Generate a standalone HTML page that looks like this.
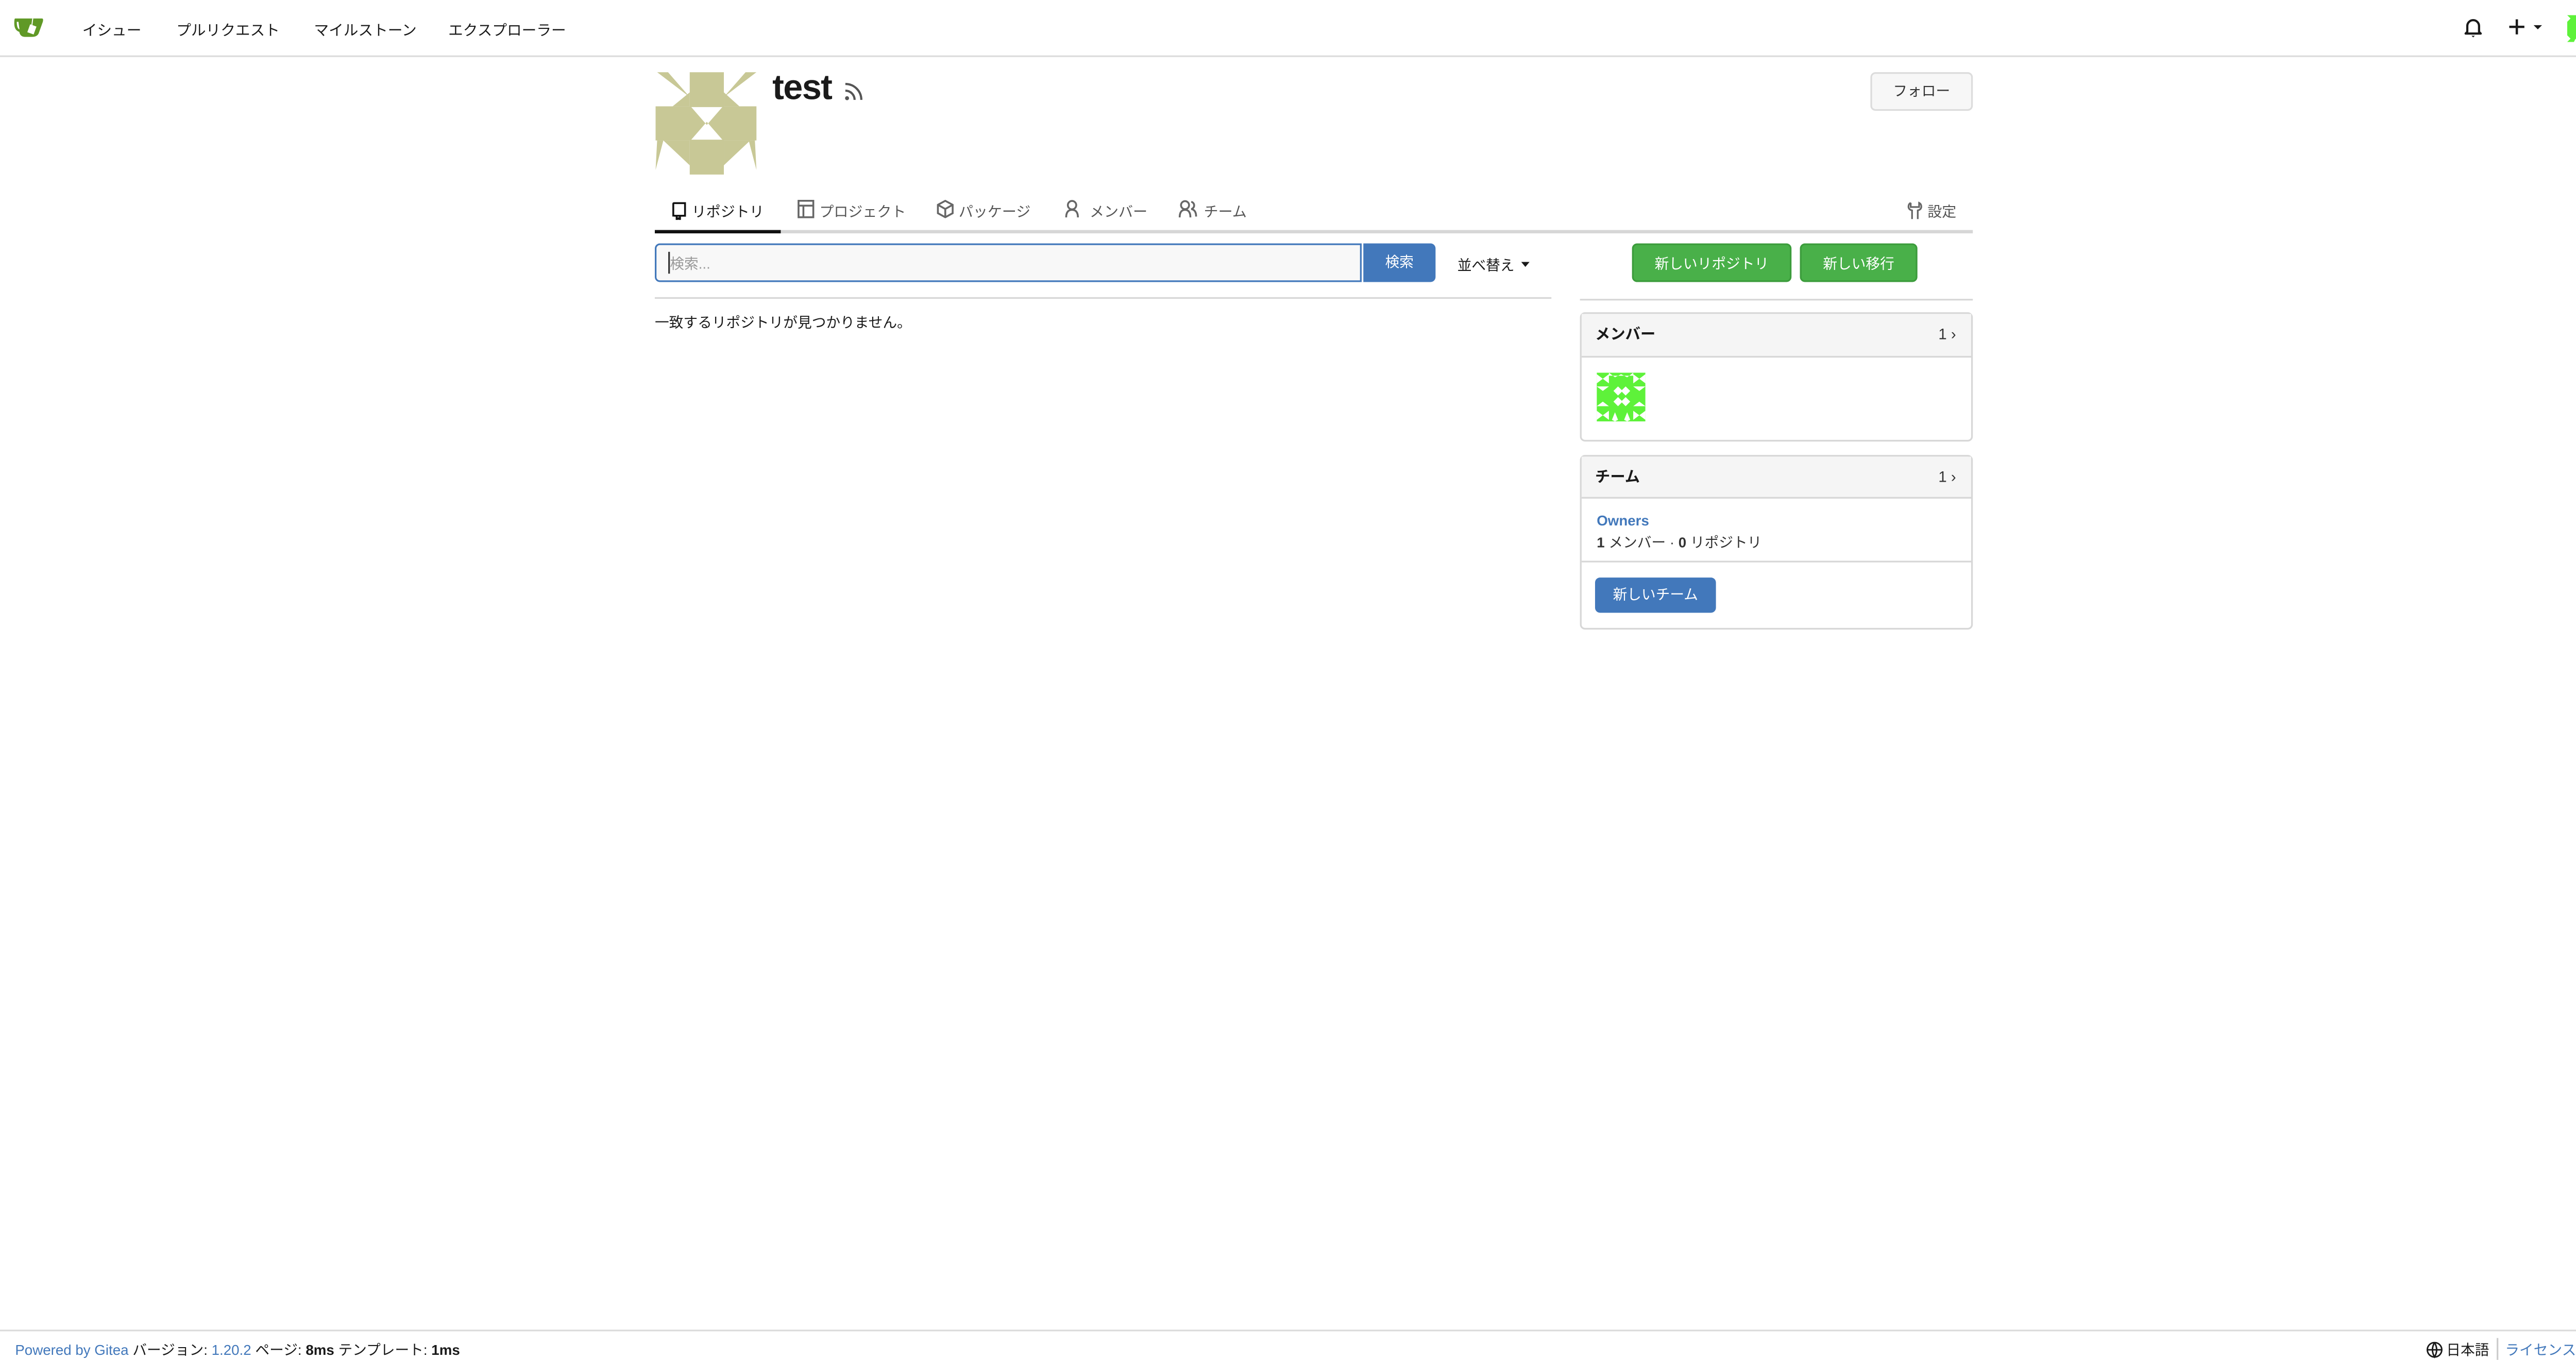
<!DOCTYPE html>
<html><head><meta charset="utf-8">
<style>
html,body{margin:0;padding:0;background:#fff;width:5110px;height:2640px;overflow:hidden;}
#w{position:absolute;left:0;top:0;width:1568px;height:810px;transform:scale(3.25893);transform-origin:0 0;font-family:"Liberation Sans","Noto Sans CJK JP",sans-serif;color:#1a1a1a;font-size:13px;}
.a{position:absolute;white-space:nowrap;}
.nav{position:absolute;left:0;top:0;width:1568px;height:33px;border-bottom:1px solid #dcdcdc;}
.blue{color:#4278bb;}
.box{position:absolute;border:1px solid #d7d7d7;border-radius:3px;background:#fff;}
.hdr{background:#f5f5f5;border-bottom:1px solid #d7d7d7;font-weight:bold;}
.btn{position:absolute;border-radius:3px;color:#fff;font-size:8.5px;text-align:center;}
.ni{font-size:8.8px;top:10.5px;}
.t{font-size:8.6px;top:120px;color:#555;}
</style></head><body><div id="w">
<div class="nav"></div>
<svg class="a" style="left:8px;top:9px" width="19" height="13" viewBox="0 0 19 13">
<path d="M1 2 H17 Q18 2 17.5 4 L15 11 Q14 13 11 13 H7 Q4 13 3.5 10 Q0.5 9 0.5 5 Q0.5 2 1 2Z" fill="#609926"/>
<path d="M2 4 Q2 8 3.6 8.5 L3 4Z" fill="#fff"/>
<rect x="9" y="6" width="4" height="5" transform="rotate(20 11 8.5)" fill="#fff"/>
<line x1="11.5" y1="2" x2="11" y2="6" stroke="#fff" stroke-width="0.6"/>
</svg>
<div class="a ni" style="left:49px">イシュー</div>
<div class="a ni" style="left:105px">プルリクエスト</div>
<div class="a ni" style="left:187px">マイルストーン</div>
<div class="a ni" style="left:267px">エクスプローラー</div>
<svg class="a" style="left:1467px;top:10px" width="12" height="13" viewBox="0 0 12 13"><path d="M2.5 9 V5.5 A3.5 3.5 0 0 1 9.5 5.5 V9 L10.5 10 H1.5Z" fill="none" stroke="#1a1a1a" stroke-width="1.3" stroke-linejoin="round"/><path d="M5 11.3 H7 L6 12.3Z" fill="#1a1a1a"/></svg>
<svg class="a" style="left:1493px;top:10px" width="24" height="12" viewBox="0 0 24 12"><path d="M6 1.5V10.5M1.5 6H10.5" stroke="#1a1a1a" stroke-width="1.4"/><path d="M16 5H21L18.5 7.5Z" fill="#1a1a1a"/></svg>
<svg class="a" style="left:1529px;top:9px" width="16" height="16" viewBox="0 0 16 16"><rect width="16" height="16" fill="#5ef23a"/><g fill="#fff"><path d="M6 5L8 3L10 5L8 7Z M6 10L8 8L10 10L8 12Z"/><path d="M0 0L2 2L0 4Z M16 0L14 2L16 4Z M0 12L2 14L0 16Z M16 12L14 14L16 16Z"/><path d="M5 14L6 16H4Z M11 14L12 16H10Z"/></g></svg>
<svg class="a" style="left:1547px;top:14px" width="6" height="4"><path d="M0 0H6L3 3Z" fill="#1a1a1a"/></svg>

<svg class="a" style="left:390px;top:43px" width="61" height="61" viewBox="0 0 65 66">
<g fill="#c8c896">
<rect x="22" y="0" width="22" height="66"/>
<rect x="0" y="22" width="65" height="22"/>
<path d="M1 0H8L22 16Z M65 0H58L44 16Z"/>
<path d="M11 22L22 13V22Z M54 22L44 13V22Z"/>
<path d="M5 44L22 60V44Z M61 44L44 60V44Z"/>
<path d="M0 63L1 44H5Z M65 63L64 44H60Z"/>
</g>
<path d="M23 22.5H43L33 34Z M23 43.5H43L33 32Z" fill="#fff"/>
</svg>
<div class="a" style="left:460px;top:41px;font-size:21px;font-weight:bold;letter-spacing:-0.5px">test</div>
<svg class="a" style="left:502px;top:48px" width="13" height="13" viewBox="0 0 13 13"><circle cx="2.5" cy="10.5" r="1.2" fill="#555"/><path d="M1.5 6A5.5 5.5 0 0 1 7 11.5M1.5 2A9.5 9.5 0 0 1 11 11.5" stroke="#555" stroke-width="1.3" fill="none"/></svg>
<div class="a" style="left:1114px;top:43px;width:59px;height:21px;border:1px solid #dcdcdc;border-radius:3px;background:#f7f7f7;font-size:8.5px;line-height:21px;text-align:center;color:#333">フォロー</div>

<!-- tabs -->
<div class="a" style="left:390px;top:137px;width:785px;height:1.5px;background:#d7d7d7"></div>
<div class="a" style="left:390px;top:136.5px;width:75px;height:2px;background:#111"></div>
<svg class="a" style="left:400px;top:120px" width="9" height="11" viewBox="0 0 9 11"><path d="M1 9V1.5Q1 1 1.5 1H8V8.5H1.5M3 8.5V11L4 10L5 11V8.5" fill="none" stroke="#111" stroke-width="1.1"/></svg>
<div class="a t" style="left:412px;color:#1a1a1a">リポジトリ</div>
<svg class="a" style="left:475px;top:119px" width="10" height="11" viewBox="0 0 10 11"><rect x="0.6" y="0.6" width="8.8" height="9.8" fill="none" stroke="#666" stroke-width="1.1"/><path d="M0.6 3.5H9.4M3.5 3.5V10.4" stroke="#666" stroke-width="1.1"/></svg>
<div class="a t" style="left:488px">プロジェクト</div>
<svg class="a" style="left:558px;top:119px" width="10" height="11" viewBox="0 0 10 11"><path d="M5 0.6L9.4 3V8L5 10.4L0.6 8V3Z M0.6 3L5 5.5L9.4 3M5 5.5V10.4" fill="none" stroke="#666" stroke-width="1.1"/></svg>
<div class="a t" style="left:571px">パッケージ</div>
<svg class="a" style="left:634px;top:119px" width="9" height="11" viewBox="0 0 9 11"><circle cx="4.5" cy="3.2" r="2.5" fill="none" stroke="#666" stroke-width="1.1"/><path d="M1 10.5Q1 6 4.5 6Q8 6 8 10.5" fill="none" stroke="#666" stroke-width="1.1"/></svg>
<div class="a t" style="left:649px">メンバー</div>
<svg class="a" style="left:702px;top:119px" width="11" height="11" viewBox="0 0 11 11"><circle cx="3.8" cy="3.2" r="2.4" fill="none" stroke="#666" stroke-width="1.1"/><path d="M0.6 10.5Q0.6 6 3.8 6Q7 6 7 10.5M7.5 1.2A2.2 2.2 0 0 1 7.5 5.5Q10.4 6 10.4 10" fill="none" stroke="#666" stroke-width="1.1"/></svg>
<div class="a t" style="left:717px">チーム</div>
<svg class="a" style="left:1136px;top:120px" width="9" height="11" viewBox="0 0 9 11"><path d="M2 0.8Q0.5 1.5 0.7 3.5Q1 5 2.8 5.3V10.5M6.2 10.5V5.3Q8 5 8.3 3.5Q8.5 1.5 7 0.8V3.3H2V0.8" fill="none" stroke="#666" stroke-width="1"/></svg>
<div class="a t" style="left:1148px">設定</div>

<!-- search -->
<div class="a" style="left:390px;top:145px;width:419px;height:21px;border:1px solid #4278bb;border-radius:3px 0 0 3px;background:#f8f8f8"></div>
<div class="a" style="left:399px;top:151px;font-size:8.5px;color:#999">検索...</div>
<div class="a" style="left:398px;top:150px;width:0.5px;height:13px;background:#333"></div>
<div class="btn" style="left:812px;top:145px;width:43px;height:23px;line-height:23px;background:#4278bb;border-radius:0 3px 3px 0">検索</div>
<div class="a" style="left:868px;top:152px;font-size:8.5px">並べ替え</div>
<svg class="a" style="left:906px;top:156px" width="6" height="4"><path d="M0 0H5L2.5 3Z" fill="#1a1a1a"/></svg>
<div class="a" style="left:390px;top:176.5px;width:534px;height:1px;background:#d7d7d7"></div>
<div class="a" style="left:390px;top:186px;font-size:8.5px">一致するリポジトリが見つかりません。</div>

<!-- right -->
<div class="btn" style="left:972px;top:145px;width:95px;height:23px;line-height:23px;background:#49b049;border:0.5px solid #3c9c3c;box-sizing:border-box">新しいリポジトリ</div>
<div class="btn" style="left:1072px;top:145px;width:70px;height:23px;line-height:23px;background:#49b049;border:0.5px solid #3c9c3c;box-sizing:border-box">新しい移行</div>
<div class="a" style="left:941px;top:177.5px;width:234px;height:1px;background:#d7d7d7"></div>

<div class="box" style="left:941px;top:186px;width:232px;height:75px">
<div class="hdr" style="height:25px;line-height:25px;padding-left:8px;font-size:9px;position:relative">メンバー<span style="position:absolute;right:9px;font-weight:normal;color:#333">1 ›</span></div>
<svg style="position:absolute;left:9px;top:35px" width="29" height="29" viewBox="0 0 16 16"><rect width="16" height="16" fill="#5ef23a"/><g fill="#fff"><path d="M4 0L6 1.5L8 0.5L10 1.5L12 0V1H4Z"/><path d="M5.5 6L7 4.5L8.5 6L7 7.5Z M8 6L9.5 4.5L11 6L9.5 7.5Z M5.5 9.5L7 8L8.5 9.5L7 11Z M8 9.5L9.5 8L11 9.5L9.5 11Z"/><path d="M0 0.5L2 2L0 3.5Z M4 0.5L2 2L4 3.5Z M12 0.5L14 2L12 3.5Z M16 0.5L14 2L16 3.5Z M0 12.5L2 14L0 15.5Z M4 12.5L2 14L4 15.5Z M12 12.5L14 14L12 15.5Z M16 12.5L14 14L16 15.5Z"/><path d="M0 4.5H4L2 6Z M12 4.5H16L14 6Z M0 11H4L2 9.5Z M12 11H16L14 9.5Z M6 13L7 15.5L6 16L5 15.5Z M10 13L11 15.5L10 16L9 15.5Z"/></g></svg>
</div>

<div class="box" style="left:941px;top:271px;width:232px;height:102px">
<div class="hdr" style="height:24px;line-height:24px;padding-left:8px;font-size:9px;position:relative">チーム<span style="position:absolute;right:9px;font-weight:normal;color:#333">1 ›</span></div>
<div class="a blue" style="left:9px;top:33px;font-size:8.5px;font-weight:bold">Owners</div>
<div class="a" style="left:9px;top:45px;font-size:8.5px;color:#333"><b>1</b> メンバー · <b>0</b> リポジトリ</div>
<div class="a" style="left:0;top:62px;width:232px;height:1px;background:#d7d7d7"></div>
<div class="btn" style="left:8px;top:72px;width:72px;height:21px;line-height:21px;background:#4278bb">新しいチーム</div>
</div>

<!-- footer -->
<div class="a" style="left:0;top:792px;width:1568px;height:1px;background:#dcdcdc"></div>
<div class="a" style="left:9px;top:798px;font-size:8.5px"><span class="blue">Powered by Gitea</span> バージョン: <span class="blue">1.20.2</span> ページ: <b>8ms</b> テンプレート: <b>1ms</b></div>
<svg class="a" style="left:1445px;top:799px" width="10" height="10" viewBox="0 0 10 10"><circle cx="5" cy="5" r="4.3" fill="none" stroke="#1a1a1a" stroke-width="0.9"/><path d="M0.7 5H9.3M5 0.7Q2.5 5 5 9.3Q7.5 5 5 0.7" fill="none" stroke="#1a1a1a" stroke-width="0.9"/></svg>
<div class="a" style="left:1457px;top:798px;font-size:8.5px">日本語</div>
<div class="a" style="left:1487px;top:797px;width:1px;height:13px;background:#ccc"></div>
<div class="a blue" style="left:1492px;top:798px;font-size:8.5px">ライセンス</div>
<div class="a" style="left:1537px;top:797px;width:1px;height:13px;background:#ccc"></div>
<div class="a blue" style="left:1542px;top:798px;font-size:8.5px">API</div>
</div></body></html>
